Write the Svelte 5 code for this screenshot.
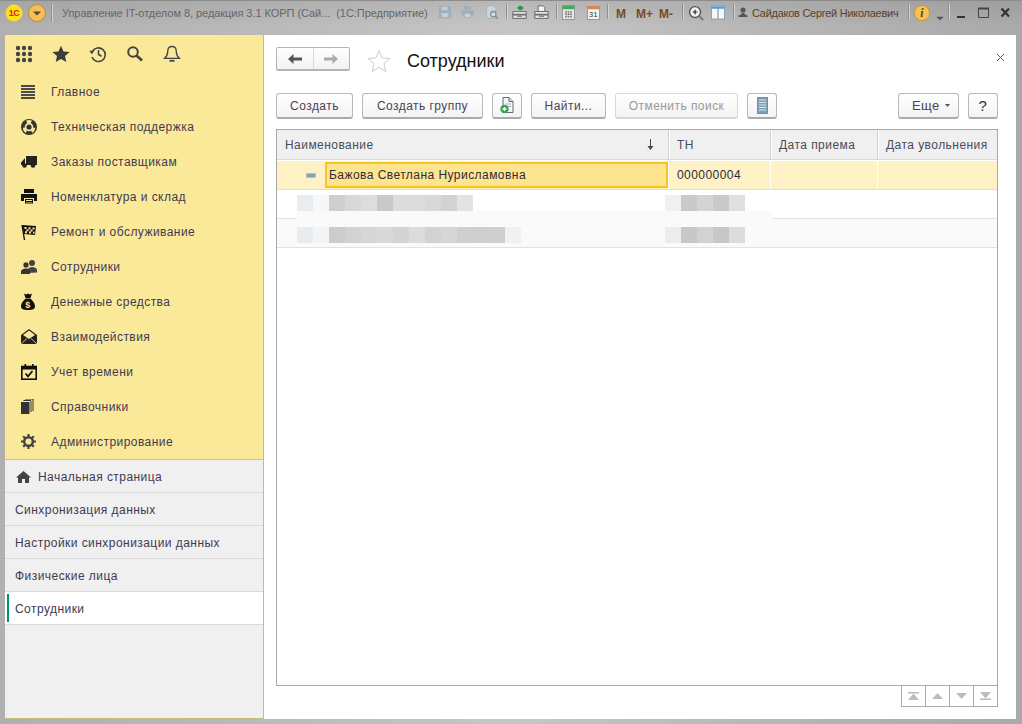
<script lang="ts">
  const sections = ['Главное', 'Техническая поддержка', 'Заказы поставщикам', 'Номенклатура и склад', 'Ремонт и обслуживание', 'Сотрудники', 'Денежные средства', 'Взаимодействия', 'Учет времени', 'Справочники', 'Администрирование'];
  const opened = ['Синхронизация данных', 'Настройки синхронизации данных', 'Физические лица'];

  // pixelated (anonymised) cells of the two lower rows
  const blurName1 = ['#e9edf1', '#f6f7f8', '#cfcfcf', '#d8d8d8', '#dddddf', '#c9c9c9', '#dcdcdc', '#dcdcdc', '#d8d8d8', '#d3d2d2', '#e2e3e5'];
  const blurName2 = ['#e8ecf0', '#f3f4f5', '#cccccc', '#d2d2d2', '#d6d6d6', '#d8d8d8', '#d4d3d2', '#dcdcdc', '#d3d2d2', '#d6d6d6', '#d0cfcf', '#cfcece', '#d0cfcf', '#f0f0f0'];
  const blurTn1 = ['#f0f0f0', '#cbcacb', '#d4d4d4', '#c9c9c9', '#dfe0e0'];
  const blurTn2 = ['#ececec', '#c9c8c9', '#d2d2d2', '#c7c7c7', '#dcdcdc'];
</script>

<div class="window">
  <header class="titlebar">
    <svg class="t-logo" width="18" height="18" viewBox="0 0 18 18"><circle cx="9" cy="9" r="8.500" fill="#ffdf1a" /><text x="9" y="12" text-anchor="middle" class="logo-text">1С</text></svg>
    <svg class="t-menu" width="18" height="18" viewBox="0 0 18 18"><circle cx="9" cy="9" r="8.500" fill="#f6bd5a" stroke="#c08a30" /><path d="M5 7.500h8l-4 4z" fill="#5a4a2a" /></svg>
    <span class="t-sep first"></span>
    <span class="t-title">Управление IT-отделом 8, редакция 3.1 КОРП (Сай...&nbsp;&nbsp;(1С:Предприятие)</span>
    <span class="t-icons">
      <svg width="14" height="14" viewBox="0 0 16 16" style="left:11px"><path d="M1 1h12l2 2v12H1z" fill="#9fadb8" /><path d="M4 2h7v4H4zM4 9h8v5H4z" fill="#c4cdd3" /></svg>
      <svg width="15" height="14" viewBox="0 0 16 16" style="left:33px"><path d="M4 1h8v4H4zM1 6h14v6h-3v3H4v-3H1z" fill="#a3aeb6" /><path d="M5 10h6v4H5z" fill="#cbd2d7" /></svg>
      <svg width="15" height="15" viewBox="0 0 18 18" style="left:58px"><path d="M2 1h8l3 3v12H2z" fill="#cfd6da" stroke="#a5b1b9" /><circle cx="10" cy="11" r="3.200" fill="#d7dde1" stroke="#7f929e" stroke-width="1.600" /><path d="M12.500 13.500l3 3" stroke="#7f929e" stroke-width="2" /></svg>
      <span class="t-sep" style="left:79px"></span>
      <svg width="15" height="15" viewBox="0 0 18 18" style="left:85px"><path d="M9 1v5M6.500 3.500H12M10 1.200l2.600 2.300L10 6" fill="none" stroke="#1f9f33" stroke-width="2" /><rect x="1" y="8" width="16" height="3" fill="#f0f0f0" stroke="#555" /><rect x="1" y="12" width="16" height="4" fill="#dfe3e6" stroke="#555" /><path d="M6 13.500h6" stroke="#555" /></svg>
      <svg width="15" height="15" viewBox="0 0 18 18" style="left:107px"><path d="M5 1h6l2 2v5H5z" fill="#f4f4f4" stroke="#555" /><rect x="1" y="8" width="16" height="3" fill="#f0f0f0" stroke="#555" /><rect x="1" y="12" width="16" height="4" fill="#dfe3e6" stroke="#555" /><path d="M6 13.500h6" stroke="#555" /></svg>
      <span class="t-sep" style="left:129px"></span>
      <svg width="13" height="15" viewBox="0 0 16 18" style="left:135px"><rect x=".5" y=".5" width="15" height="17" fill="#e8e8e8" stroke="#8a8a8a" /><rect x="1" y="1" width="14" height="4" fill="#42ab55" /><path d="M4 7h2v2H4zM7 7h2v2H7zM10 7h2v2h-2zM4 10h2v2H4zM7 10h2v2H7zM10 10h2v2h-2zM4 13h2v2H4zM7 13h2v2H7zM10 13h2v2h-2z" fill="#777" /></svg>
      <svg width="13" height="15" viewBox="0 0 16 18" style="left:160px"><rect x=".5" y="1.500" width="15" height="16" fill="#f2f2f2" stroke="#8a8a8a" /><rect x="1" y="1" width="14" height="4" fill="#d8894f" /><text x="8" y="15" text-anchor="middle" class="cal-text">31</text></svg>
      <span class="t-sep" style="left:180px"></span>
      <b class="mem" style="left:189px">M</b>
      <b class="mem" style="left:209px">M+</b>
      <b class="mem" style="left:232px">M-</b>
      <span class="t-sep" style="left:255px"></span>
      <svg width="16" height="16" viewBox="0 0 17 17" style="left:261px"><circle cx="7.500" cy="7.500" r="5.800" fill="#f2f2f2" stroke="#555" stroke-width="1.500" /><path d="M5 7.500h5M7.500 5v5" stroke="#222" stroke-width="1.200" /><path d="M12 12l4 4" stroke="#6b7f8c" stroke-width="2.200" /></svg>
      <svg width="14" height="15" viewBox="0 0 15 15" style="left:284px"><rect x=".5" y=".5" width="14" height="14" fill="#f7f7f7" stroke="#7a9fbd" /><rect x="1" y="1" width="13" height="2.500" fill="#4e9fdc" /><path d="M7.500 3v11" stroke="#5d7f99" /></svg>
      <span class="t-sep" style="left:306px"></span>
    </span>
    <svg class="t-person" width="10" height="11" viewBox="0 0 11 12"><circle cx="5.500" cy="3.200" r="2.800" fill="#555" /><path d="M3.800 6.500h3.400v1.400l3.300 1.300V11H.5V9.200l3.300-1.300z" fill="#555" /></svg>
    <span class="t-user">Сайдаков Сергей Николаевич</span>
    <span class="t-sep user"></span>
    <svg class="t-info" width="16" height="16" viewBox="0 0 18 18"><circle cx="9" cy="9" r="8.500" fill="#f6c350" stroke="#c9913a" /><text x="9" y="14" text-anchor="middle" class="info-text">i</text></svg>
    <svg class="t-caret" width="8" height="5" viewBox="0 0 9 6"><path d="M0 1h9L4.500 5z" fill="#555" /></svg>
    <span class="t-sep caret"></span>
    <svg class="t-win" width="60" height="14" viewBox="0 0 60 14"><path d="M1 12h8" stroke="#333" stroke-width="2" /><path d="M22.500 3.500h10v9h-10z" fill="none" stroke="#444" /><path d="M22 3.500h11" stroke="#444" stroke-width="2" /><path d="M45.500 3.500l7.500 8M53 3.500l-7.500 8" stroke="#333" stroke-width="2.200" /></svg>
  </header>

  <div class="body">
    <aside class="sidebar">
      <div class="yellow">
        <div class="quick">
          <svg width="18" height="18" viewBox="0 0 18 18" fill="#444"><circle cx="3" cy="3" r="2.200" /><circle cx="9" cy="3" r="2.200" /><circle cx="15" cy="3" r="2.200" /><circle cx="3" cy="9" r="2.200" /><circle cx="9" cy="9" r="2.200" /><circle cx="15" cy="9" r="2.200" /><circle cx="3" cy="15" r="2.200" /><circle cx="9" cy="15" r="2.200" /><circle cx="15" cy="15" r="2.200" /></svg>
          <svg width="18" height="18" viewBox="0 0 18 18" fill="#3c3c3c"><path d="M9 .8l2.500 5.600 6.100.6-4.600 4.100 1.300 6L9 14l-5.300 3.100 1.300-6L.4 7l6.100-.6z" /></svg>
          <svg width="18" height="18" viewBox="0 0 18 18" fill="none" stroke="#444" stroke-width="1.600"><path d="M3.400 6.500A6.800 6.800 0 1 1 3 12" /><path d="M9.500 5v4.500l3 1.800" /><path d="M.3 5.800h5L2.800 9.300z" fill="#444" stroke="none" /></svg>
          <svg width="18" height="18" viewBox="0 0 18 18" fill="none" stroke="#444"><circle cx="7" cy="7" r="4.800" stroke-width="2" /><path d="M10.500 10.500l5.500 5" stroke-width="2.600" /></svg>
          <svg width="18" height="18" viewBox="0 0 18 18" fill="none" stroke="#444" stroke-width="1.300"><path d="M9 1.500c-3 0-4.300 2.300-4.300 5 0 3.500-1 5-3 6.800h14.600c-2-1.800-3-3.300-3-6.800 0-2.700-1.300-5-4.300-5z" /><path d="M6.500 15.800h5" stroke-width="1.800" /></svg>
        </div>
        <nav class="sections">
          {#each sections as name, i}
            <div class="section">
              <span class="s-icon">
                {#if i === 0}
                  <svg width="14" height="14" viewBox="0 0 14 14" fill="#4a4a4a"><path d="M0 0h14v2H0zM0 3h14v2H0zM0 6h14v2H0zM0 9h14v2H0zM0 12h14v2H0z" /></svg>
                {:else if i === 1}
                  <svg width="16" height="16" viewBox="0 0 16 16"><circle cx="8" cy="8" r="8" fill="#333" /><circle cx="8" cy="8" r="4.300" fill="#fbe99a" /><circle cx="8" cy="8" r="2.600" fill="#333" /><path d="M5 1.800a7 7 0 0 1 6 0L9.500 4.200a4 4 0 0 0-3 0zM14.300 8.800a7 7 0 0 1-3 5.300L10 11.500a4 4 0 0 0 1.500-2.700zM1.700 8.800a7 7 0 0 0 3 5.300L6 11.500a4 4 0 0 1-1.500-2.700z" fill="#fbe99a" /></svg>
                {:else if i === 2}
                  <svg width="16" height="12" viewBox="0 0 16 12" fill="#222"><path d="M5 0h11v9H5zM4 2v7H0V6.500z" /><circle cx="3.500" cy="9.500" r="2.300" /><circle cx="12" cy="9.500" r="2.300" /></svg>
                {:else if i === 3}
                  <svg width="16" height="15" viewBox="0 0 16 15" fill="#111"><path d="M3 0h10v4H3zM0 5h16v7h-3V9H3v3H0z" /><path d="M4 10h8v4.500H4z" /><path d="M5 11h6v1H5zM5 13h6v.6H5z" fill="#fbe99a" /></svg>
                {:else if i === 4}
                  <svg width="15" height="16" viewBox="0 0 15 16"><path d="M1 1l14 1-1 9-11-1z" fill="#111" /><path d="M3.500 3h2v2h-2zM7.500 3.300h2v2h-2zM11.500 3.600h2v2h-2zM5.500 5.200h2v2h-2zM9.500 5.400h2v2h-2zM4 7.300h2v2H4zM8 7.600h2v2H8zM12 7.800h1.500v2H12z" fill="#fbe99a" /><path d="M1 1l2.500 15" stroke="#111" stroke-width="1.300" /></svg>
                {:else if i === 5}
                  <svg width="16" height="14" viewBox="0 0 16 14" fill="#444"><circle cx="11" cy="3" r="3" /><path d="M7 13V9.500c0-1.500 2-2.500 4-2.500s5 1 5 3v2.500z" /><circle cx="5" cy="5" r="3" fill="#333" stroke="#fbe99a" stroke-width=".6" /><path d="M0 14v-2.500C0 9.500 3 8.500 5 8.500s4 1 4 3V14z" fill="#333" /></svg>
                {:else if i === 6}
                  <svg width="14" height="17" viewBox="0 0 14 17"><path d="M3 .5l2 1 2-1 2 1 2-1-1.500 4.500h-5zM4.500 5.500h5C12 8 14 10.500 14 13c0 3-2 4-7 4s-7-1-7-4c0-2.500 2-5 4.500-7.500z" fill="#111" /><text x="7" y="14.500" text-anchor="middle" class="dollar">$</text></svg>
                {:else if i === 7}
                  <svg width="16" height="15" viewBox="0 0 16 15"><path d="M8 0l8 6v9H0V6z" fill="#222" /><path d="M8 1.600L14 6 8 10 2 6z" fill="#fbe99a" /><path d="M0 15l6-5.500M16 15l-6-5.500" stroke="#fbe99a" stroke-width=".8" /></svg>
                {:else if i === 8}
                  <svg width="16" height="16" viewBox="0 0 16 16"><rect x=".8" y="2.500" width="14.400" height="12.700" fill="#fbe99a" stroke="#111" stroke-width="1.600" /><path d="M0 2h16v3.500H0z" fill="#111" /><path d="M3.500 0h1.600v3H3.500zM11 0h1.600v3H11z" fill="#111" /><path d="M4.500 9.500l2.500 2.800L11.500 7" fill="none" stroke="#111" stroke-width="1.800" /></svg>
                {:else if i === 9}
                  <svg width="13" height="15" viewBox="0 0 13 15" fill="#333"><path d="M0 3h8.500v12H0z" /><path d="M10 2v11" stroke="#333" /><path d="M2.500 1.500H10M12 0v12M4 0h8" fill="none" stroke="#333" /></svg>
                {:else}
                  <svg width="15" height="15" viewBox="0 0 15 15"><circle cx="7.500" cy="7.500" r="4.300" fill="none" stroke="#444" stroke-width="2.400" /><path d="M7.500 0v3M7.500 12v3M0 7.500h3M12 7.500h3M2.200 2.200l2 2M10.800 10.800l2 2M12.800 2.200l-2 2M4.200 10.800l-2 2" stroke="#444" stroke-width="2.200" /></svg>
                {/if}
              </span>
              <span>{name}</span>
            </div>
          {/each}
        </nav>
      </div>
      <div class="opened">
        <div class="open-row home">
          <svg width="15" height="12" viewBox="0 0 15 12" fill="#444"><path d="M7.500 0L15 6.500h-2V12H9V8H6v4H2V6.500H0z" /></svg>
          <span>Начальная страница</span>
        </div>
        {#each opened as name}
          <div class="open-row">{name}</div>
        {/each}
        <div class="open-row active">Сотрудники</div>
      </div>
    </aside>

    <main class="content">
      <div class="head">
        <div class="nav-group">
          <span class="nav-btn"><svg width="14" height="10" viewBox="0 0 14 10" fill="#555"><path d="M5.500 0v3.500H14v3H5.500V10L0 5z" /></svg></span>
          <span class="nav-btn"><svg width="14" height="10" viewBox="0 0 14 10" fill="#aaa"><path d="M8.500 0v3.500H0v3h8.500V10L14 5z" /></svg></span>
        </div>
        <svg class="star" width="24" height="24" viewBox="0 0 24 24"><path d="M12 1.500l3 7.400 8 .6-6.100 5.200 1.900 7.800L12 18.300l-6.800 4.200 1.900-7.800L1 9.500l8-.6z" fill="#fff" stroke="#c9ced2" /></svg>
        <h1>Сотрудники</h1>
        <svg class="close" width="9" height="9" viewBox="0 0 9 9"><path d="M1 1l7 7M8 1L1 8" stroke="#555" /></svg>
      </div>

      <div class="commands">
        <button class="b-create">Создать</button>
        <button class="b-group">Создать группу</button>
        <button class="b-icon"><svg width="14" height="17" viewBox="0 0 14 17"><path d="M3 .5h6l4 4v11H3z" fill="#f7f7f7" stroke="#667" /><path d="M9 .5v4h4" fill="#d5dce2" stroke="#667" /><path d="M6 7h5M6 9.500h5" stroke="#aab" /><circle cx="4.500" cy="12" r="4.200" fill="#2fa84f" /><path d="M2.500 12h4M4.500 10v4" stroke="#fff" stroke-width="1.300" /></svg></button>
        <button class="b-find">Найти...</button>
        <button class="b-cancel" disabled>Отменить поиск</button>
        <button class="b-icon"><svg width="11" height="17" viewBox="0 0 11 17"><rect x=".5" y=".5" width="10" height="16" fill="#7f9fb6" stroke="#7090a6" /><path d="M2 3h7M2 5.500h7M2 8h7M2 10.500h7M2 13h7" stroke="#dbe5ec" /></svg></button>
        <span class="spacer"></span>
        <button class="b-more">Еще <svg width="5" height="3" viewBox="0 0 5 3"><path d="M0 0h5L2.500 3z" fill="#555" /></svg></button>
        <button class="b-help">?</button>
      </div>

      <section class="table">
        <div class="row thead">
          <div class="cell c-name">Наименование
            <svg class="sort" width="7" height="11" viewBox="0 0 7 11"><path d="M3.500 0v9" stroke="#444" /><path d="M.5 7h6l-3 4z" fill="#444" /></svg>
          </div>
          <div class="cell c-tn">ТН</div>
          <div class="cell c-hired">Дата приема</div>
          <div class="cell c-fired">Дата увольнения</div>
        </div>
        <div class="row selected">
          <div class="cell c-name"><span class="minus"></span><span class="current">Бажова Светлана Нурисламовна</span></div>
          <div class="cell c-tn">000000004</div>
          <div class="cell c-hired"></div>
          <div class="cell c-fired"></div>
        </div>
        <div class="row plain">
          <div class="blur name">{#each blurName1 as c}<i style="background:{c}"></i>{/each}</div>
          <div class="blur tn">{#each blurTn1 as c}<i style="background:{c}"></i>{/each}</div>
        </div>
        <div class="row shaded">
          <span class="smear"></span>
          <div class="blur name">{#each blurName2 as c}<i style="background:{c}"></i>{/each}</div>
          <div class="blur tn">{#each blurTn2 as c}<i style="background:{c}"></i>{/each}</div>
        </div>
      </section>

      <div class="pager">
        <span><svg width="11" height="8" viewBox="0 0 11 8" fill="#bcbcbc"><path d="M0 0h11v1.500H0zM5.500 1.500L11 8H0z" /></svg></span>
        <span><svg width="11" height="6" viewBox="0 0 11 6" fill="#bcbcbc"><path d="M5.500 0L11 6H0z" /></svg></span>
        <span><svg width="11" height="6" viewBox="0 0 11 6" fill="#bcbcbc"><path d="M0 0h11L5.500 6z" /></svg></span>
        <span><svg width="11" height="8" viewBox="0 0 11 8" fill="#bcbcbc"><path d="M0 0h11L5.500 6.500zM0 6.500h11V8H0z" /></svg></span>
      </div>
    </main>
  </div>
</div>

<style>
  :global(body) {
    margin: 0;
    font-family: "Liberation Sans", Arial, sans-serif;
  }

  .window {
    width: 1022px;
    height: 724px;
    display: flex;
    flex-direction: column;
    overflow: hidden;
    background: linear-gradient(90deg, #b0b0b0 0%, #bcbcbc 30%, #c6c6c6 50%, #b4b4b4 80%, #aaaaac 100%);
    font-size: 12px;
    letter-spacing: 0.45px;
    color: #4b4256;
  }

  /* title bar */
  .titlebar {
    position: relative;
    height: 35px;
    flex: none;
    box-sizing: border-box;
    border-top: 1px solid #8c8c8c;
    display: flex;
    align-items: flex-start;
    background: linear-gradient(rgba(0, 0, 0, 0.07), rgba(0, 0, 0, 0) 26px);
  }
  .t-logo { margin: 3px 0 0 5px; flex: none; }
  .logo-text { font: bold 9px "Liberation Sans", sans-serif; fill: #d8261c; letter-spacing: -0.5px; }
  .t-menu { margin: 3px 0 0 5px; flex: none; }
  .t-sep {
    width: 1px;
    height: 15px;
    background: #8f8f8f;
    box-shadow: 1px 0 0 #d2d2d2;
    flex: none;
    position: absolute;
    top: 3px;
  }
  .t-sep.first { left: 51px; height: 18px; }
  .t-title {
    position: absolute;
    left: 62px;
    top: 6px;
    color: #66666a;
    white-space: nowrap;
    letter-spacing: -0.05px;
    font-size: 11px;
  }
  .t-icons {
    position: absolute;
    left: 427px;
    top: 0;
    width: 320px;
    height: 30px;
  }
  .t-icons svg { position: absolute; top: 4px; }
  .mem {
    position: absolute;
    top: 6px;
    font-size: 12px;
    color: #7c4a1e;
    letter-spacing: 0;
  }
  .t-person { position: absolute; left: 738px; top: 6px; }
  .t-user {
    position: absolute;
    left: 752px;
    top: 6px;
    font-size: 11px;
    letter-spacing: -0.27px;
    color: #5b4126;
    white-space: nowrap;
  }
  .t-sep.user { left: 908px; }
  .t-info { position: absolute; left: 914px; top: 4px; }
  .info-text { font: italic bold 13px "Liberation Serif", serif; fill: #5c4212; }
  .t-caret { position: absolute; left: 936px; top: 15px; }
  .t-sep.caret { left: 948px; }
  .t-win { position: absolute; left: 956px; top: 4px; }
  .cal-text { font: 9px "Liberation Sans", sans-serif; fill: #333; }
  .dollar { font: bold 9px "Liberation Sans", sans-serif; fill: #fbe99a; }

  /* sidebar + content */
  .body {
    flex: 1;
    min-height: 0;
    display: flex;
    margin: 0 6px 5px 5px;
    background: #fff;
  }
  .sidebar {
    width: 259px;
    flex: none;
    box-sizing: border-box;
    display: flex;
    flex-direction: column;
    background: #f0f0f0;
    border-right: 1px solid #c9bc7a;
    border-bottom: 1px solid #c9bc7a;
  }
  .yellow {
    background: #fbe99a;
    border-bottom: 1px solid #d0c68a;
    height: 425px;
    flex: none;
    box-sizing: border-box;
  }
  .quick {
    height: 39px;
    box-sizing: border-box;
    display: flex;
    align-items: center;
    gap: 19px;
    padding: 0 0 2px 10px;
  }
  .section {
    height: 35px;
    display: flex;
    align-items: center;
    color: #3f3a52;
  }
  .s-icon {
    width: 46px;
    padding-left: 16px;
    box-sizing: border-box;
    flex: none;
    display: flex;
  }
  .open-row {
    height: 33px;
    box-sizing: border-box;
    border-bottom: 1px solid #d9d9d9;
    display: flex;
    align-items: center;
    padding: 1px 0 0 10px;
    color: #3f3a52;
  }
  .open-row.home { gap: 7px; padding-left: 11px; }
  .open-row.active {
    background: #fff;
    position: relative;
  }
  .open-row.active::before {
    content: '';
    position: absolute;
    left: 2px;
    top: 2px;
    bottom: 2px;
    width: 2px;
    background: #00965a;
  }

  .content {
    flex: 1;
    min-width: 0;
    padding: 0 18px 0 12px;
    display: flex;
    flex-direction: column;
    position: relative;
  }
  .head {
    height: 58px;
    display: flex;
    align-items: center;
    padding-bottom: 6px;
    box-sizing: border-box;
    flex: none;
  }
  .nav-group {
    display: flex;
    width: 74px;
    height: 24px;
    margin-bottom: 4px;
    box-sizing: border-box;
    border: 1px solid #b4b4b4;
    border-bottom-width: 2px;
    border-radius: 2px;
    background: linear-gradient(#ffffff, #f2f2f2);
  }
  .nav-btn {
    flex: 1;
    display: flex;
    align-items: center;
    justify-content: center;
  }
  .nav-btn + .nav-btn { border-left: 1px solid #d8d8d8; }
  .star { margin-left: 17px; }
  h1 {
    margin: 0 0 0 16px;
    font-size: 18px;
    font-weight: 400;
    color: #111;
    letter-spacing: 0;
  }
  .close {
    position: absolute;
    right: 11px;
    top: 18px;
  }

  .commands {
    display: flex;
    gap: 9px;
    height: 26px;
    flex: none;
  }
  .spacer { flex: 1; }
  button {
    height: 26px;
    box-sizing: border-box;
    padding: 0;
    border: 1px solid #b8b8b8;
    border-bottom: 2px solid #aaaaaa;
    border-radius: 3px;
    background: linear-gradient(#ffffff, #f3f3f3);
    color: #4b4256;
    font: inherit;
    letter-spacing: inherit;
    display: flex;
    align-items: center;
    justify-content: center;
  }
  .b-create { width: 77px; }
  .b-group { width: 121px; }
  .b-icon { width: 30px; }
  .b-find { width: 75px; }
  .b-cancel { width: 123px; color: #999; border-color: #d8d8d8; }
  .b-more {
    width: 61px;
    gap: 5px;
    font-size: 13px;
    justify-content: flex-start;
    padding-left: 13px;
  }
  .b-help { width: 30px; font-size: 15px; color: #333; }

  .table {
    flex: 1;
    min-height: 0;
    margin-top: 10px;
    border: 1px solid #a9a9a9;
    background: #fff;
  }
  .row { display: flex; position: relative; }
  .cell {
    box-sizing: border-box;
    height: 100%;
    display: flex;
    align-items: center;
    padding-left: 8px;
    border-right: 1px solid #fff;
    position: relative;
  }
  .c-name { width: 392px; }
  .c-tn { width: 102px; }
  .c-hired { width: 107px; }
  .c-fired { flex: 1; border-right: none; }
  .thead {
    height: 31px;
    background: #f0f0f0;
    border-bottom: 1px solid #fff;
    box-sizing: border-box;
  }
  .thead .cell {
    border-right: 1px solid #d2d2d2;
    box-shadow: 1px 0 0 #fff;
    border-bottom: 1px solid #d9d9d9;
    color: #4b4b5a;
  }
  .thead .c-fired { border-right: none; box-shadow: none; }
  .sort {
    position: absolute;
    right: 14px;
    top: 9px;
  }
  .selected {
    height: 29px;
    background: #fdf1c5;
    border-bottom: 1px solid #dedede;
    box-sizing: border-box;
    color: #2f2a3a;
  }
  .selected .cell { padding-left: 8px; }
  .selected .c-name { padding-left: 0; }
  .minus {
    width: 10px;
    height: 5px;
    margin-left: 29px;
    margin-right: 9px;
    background: #7fa3bb;
    border: 1px solid #c8c29a;
    box-sizing: border-box;
    flex: none;
  }
  .current {
    flex: 1;
    align-self: stretch;
    display: flex;
    align-items: center;
    margin: 1px 0;
    padding-left: 3px;
    background: #fee48e;
    border: 1px solid #f6c51e;
    outline: 1px solid #f6c51e;
    outline-offset: -2px;
  }
  .plain {
    height: 29px;
    border-bottom: 1px solid #e2e2e2;
    box-sizing: border-box;
  }
  .shaded {
    height: 29px;
    background: #fafafa;
    border-bottom: 1px solid #e2e2e2;
    box-sizing: border-box;
  }
  .blur {
    position: absolute;
    display: flex;
    height: 16px;
    top: 5px;
  }
  .blur i { width: 16px; height: 16px; display: block; }
  .blur.name { left: 20px; }
  .blur.tn { left: 388px; }
  .shaded .blur { top: 8px; }
  .smear {
    position: absolute;
    left: 20px;
    width: 476px;
    top: -8px;
    height: 8px;
    background: #fafafa;
  }

  .pager {
    align-self: flex-end;
    display: flex;
    height: 21px;
    flex: none;
    margin-bottom: 12px;
  }
  .pager span {
    width: 24px;
    box-sizing: border-box;
    border: 1px solid #aaaaaa;
    border-top: none;
    border-left-width: 0;
    display: flex;
    align-items: center;
    justify-content: center;
  }
  .pager span:first-child { border-left-width: 1px; width: 25px; }
</style>
